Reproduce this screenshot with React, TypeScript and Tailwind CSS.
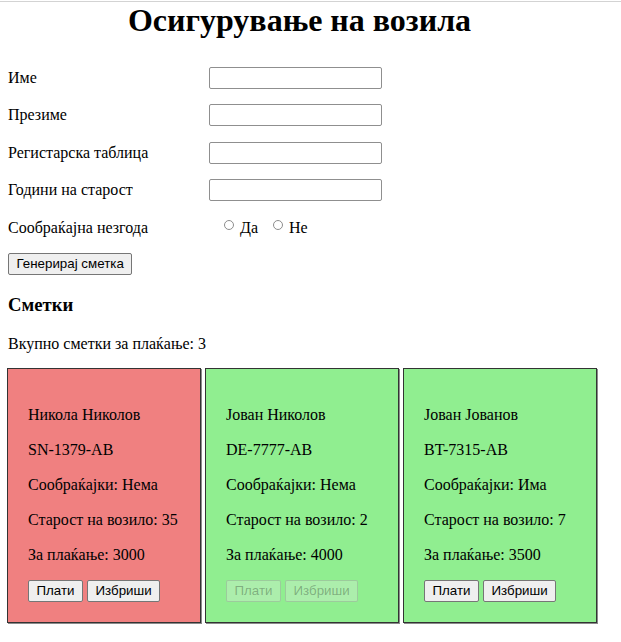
import React from "react";

type Bill = {
  name: string;
  plate: string;
  accident: string;
  age: number;
  amount: number;
  paid: boolean;
};

const bills: Bill[] = [
  { name: "Никола Николов", plate: "SN-1379-AB", accident: "Нема", age: 35, amount: 3000, paid: false },
  { name: "Јован Николов", plate: "DE-7777-AB", accident: "Нема", age: 2, amount: 4000, paid: true },
  { name: "Јован Јованов", plate: "BT-7315-AB", accident: "Има", age: 7, amount: 3500, paid: true },
];

const fields = ["Име", "Презиме", "Регистарска таблица", "Години на старост"];

const btn =
  "h-[22px] px-[7.5px] border rounded-[2px] font-['Liberation_Sans',Arial,sans-serif] text-[13.33px] leading-none";

const Button = ({ children, disabled }: { children: React.ReactNode; disabled?: boolean }) => (
  <button
    disabled={disabled}
    className={
      btn +
      (disabled
        ? " bg-[#efefef]/30 border-[#767676]/30 text-[#101010]/30"
        : " bg-[#efefef] border-[#767676] text-black")
    }
  >
    {children}
  </button>
);

const Radio = ({ label }: { label: string }) => (
  <label className="flex items-center gap-[6px]">
    <input
      type="radio"
      name="accident"
      className="appearance-none w-[10px] h-[10px] mb-[5px] rounded-full border border-[#8d8d8d] bg-white"
    />
    <span>{label}</span>
  </label>
);

export default function App() {
  return (
    <div className="min-h-screen bg-white text-black font-['Liberation_Serif','Times_New_Roman',serif] text-[16px]">
      <div className="h-px mt-px bg-[#d3d3d3]" />
      <h1 className="w-[599px] text-center text-[32px] font-bold leading-[37px]">
        Осигурување на возила
      </h1>

      <div className="px-2 mt-[20px]">
        {fields.map((f) => (
          <div key={f} className="h-[37.5px] flex items-center">
            <span className="w-[201px]">{f}</span>
            <input
              type="text"
              className="w-[173px] h-[22px] border border-[#8f8f8f] rounded-[2px] bg-white"
            />
          </div>
        ))}
        <div className="h-[37.5px] flex items-center">
          <span className="w-[201px]">Сообраќајна незгода</span>
          <div className="flex items-center gap-[15px] pl-[15px]">
            <Radio label="Да" />
            <Radio label="Не" />
          </div>
        </div>

        <div className="mt-[4.5px]">
          <Button>Генерирај сметка</Button>
        </div>

        <h3 className="mt-[19px] text-[18.72px] font-bold leading-[21.5px]">Сметки</h3>
        <p className="mt-[18px] leading-[19px]">Вкупно сметки за плаќање: {bills.length}</p>
      </div>

      <div className="flex gap-[4px] pl-[7px] mt-[15.5px]">
        {bills.map((b) => (
          <div
            key={b.plate}
            className={
              "w-[194px] p-[20px] border border-[#333] shadow-[1px_1px_0_#8a8a8a] " +
              (b.paid ? "bg-[#90ee90]" : "bg-[#f08080]")
            }
          >
            <p className="mt-4 leading-[19px]">{b.name}</p>
            <p className="mt-4 leading-[19px]">{b.plate}</p>
            <p className="mt-4 leading-[19px]">Сообраќајки: {b.accident}</p>
            <p className="mt-4 leading-[19px]">Старост на возило: {b.age}</p>
            <p className="mt-4 leading-[19px]">За плаќање: {b.amount}</p>
            <div className="mt-4 flex gap-[4px]">
              <Button disabled={b.plate === "DE-7777-AB"}>Плати</Button>
              <Button disabled={b.plate === "DE-7777-AB"}>Избриши</Button>
            </div>
          </div>
        ))}
      </div>
    </div>
  );
}
